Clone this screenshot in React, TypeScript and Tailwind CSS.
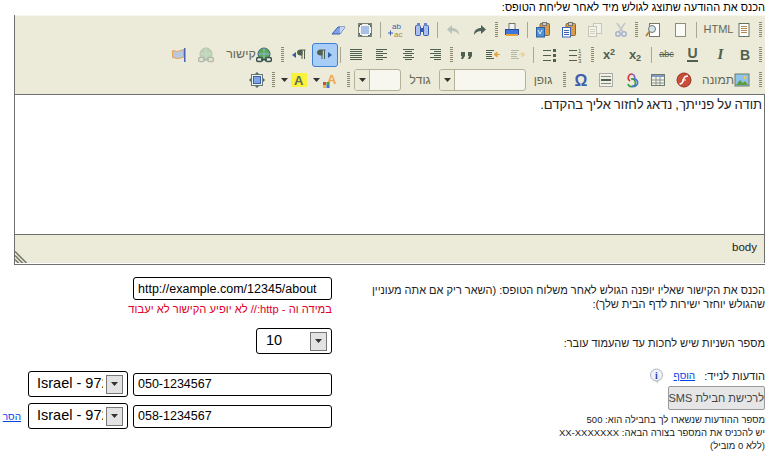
import type { ReactNode } from "react";

const handleLines =
  "w-[3px] h-[16px] bg-[repeating-linear-gradient(to_bottom,#8b8a70_0,#8b8a70_1px,#ecebd9_1px,#ecebd9_2px)]";

function Handle({ w }: { w: string }) {
  return (
    <div className={`flex shrink-0 justify-center ${w}`}>
      <div className={handleLines} />
    </div>
  );
}

function Sep({ w }: { w: string }) {
  return (
    <div className={`flex shrink-0 justify-center ${w}`}>
      <div className="h-[16px] w-px bg-[#a9a896]" />
    </div>
  );
}

function Btn({ w, children }: { w: string; children: ReactNode }) {
  return (
    <div className={`flex h-[20px] shrink-0 items-center justify-center ${w}`}>
      {children}
    </div>
  );
}

function Ico({ children, size = 16 }: { children: ReactNode; size?: number }) {
  return (
    <svg width={size} height={size} viewBox="0 0 16 16" className="shrink-0 [direction:ltr]">
      {children}
    </svg>
  );
}

function Lines({ rows }: { rows: [number, number][] }) {
  return (
    <Ico>
      {rows.map(([x, w], i) => (
        <rect key={i} x={x} y={2 + i * 2} width={w} height="1" fill="#50604f" />
      ))}
    </Ico>
  );
}

const Arrow = () => (
  <svg width="7" height="4" viewBox="0 0 7 4" className="shrink-0">
    <path d="M0 0h7L3.500 4z" fill="#333" />
  </svg>
);

const HtmlDoc = () => (
  <Ico>
    <rect x="3" y="1.500" width="10" height="13" fill="#fff" stroke="#65735f" />
    <path d="M5 4.500h6M5 6.500h6M5 8.500h6M5 10.500h6" stroke="#b0884c" />
  </Ico>
);
const NewDoc = () => (
  <Ico>
    <rect x="3.500" y="1.500" width="10" height="13" fill="#fbfbf5" stroke="#8c8c80" />
  </Ico>
);
const Preview = () => (
  <Ico>
    <rect x="4.500" y="1.500" width="10" height="13" fill="#fff" stroke="#77786c" />
    <circle cx="7" cy="7" r="3.500" fill="#d5e3ee" stroke="#6b7a70" />
    <path d="M4.500 9.500L1 14" stroke="#b5803a" strokeWidth="2" />
  </Ico>
);
const Cut = () => (
  <Ico>
    <path d="M4 1l6 9M12 1L6 10" stroke="#c1c4c4" strokeWidth="1.500" />
    <circle cx="5" cy="12" r="2.200" fill="none" stroke="#a6b2d0" strokeWidth="1.500" />
    <circle cx="11" cy="12" r="2.200" fill="none" stroke="#a6b2d0" strokeWidth="1.500" />
  </Ico>
);
const Copy = () => (
  <Ico>
    <rect x="6.500" y="1.500" width="8" height="10" fill="#f3f3ea" stroke="#c5c6b8" />
    <rect x="1.500" y="4.500" width="8" height="10" fill="#f3f3ea" stroke="#c5c6b8" />
    <path d="M3 7.500h5M3 9.500h5M3 11.500h5" stroke="#d0d1c4" />
  </Ico>
);
const Paste = () => (
  <Ico>
    <rect x="5" y="1.500" width="9.500" height="12" rx="1" fill="#d99a4a" stroke="#8a6a3a" />
    <rect x="7.500" y="0.500" width="4" height="3" fill="#c9cbd0" stroke="#777" />
    <rect x="1.500" y="5.500" width="8" height="9.500" fill="#fff" stroke="#3d62b3" />
    <path d="M3 8.500h5M3 10.500h5M3 12.500h5" stroke="#3d62b3" />
  </Ico>
);
const PasteWord = () => (
  <Ico>
    <rect x="5" y="1.500" width="9.500" height="12" rx="1" fill="#d99a4a" stroke="#8a6a3a" />
    <rect x="7.500" y="0.500" width="4" height="3" fill="#c9cbd0" stroke="#777" />
    <rect x="1.500" y="5.500" width="8" height="9.500" fill="#4f93d6" stroke="#2f5f9f" />
    <path d="M3 8l2 4 2-4" stroke="#dcebf8" fill="none" />
  </Ico>
);
const Print = () => (
  <Ico>
    <rect x="5" y="1.500" width="6" height="6" fill="#f2f2f2" stroke="#777" />
    <rect x="1.500" y="7.500" width="13" height="5" fill="#3f74d8" stroke="#28499a" />
    <rect x="2" y="12" width="12" height="2" fill="#e7a33b" />
  </Ico>
);
const Redo = () => (
  <Ico>
    <path d="M2 13c0-5 3-7 7-7V3l5 4.500L9 12V9c-3 0-5 1-7 4z" fill="#4d6258" />
  </Ico>
);
const Undo = () => (
  <Ico>
    <path d="M14 13c0-5-3-7-7-7V3L2 7.500 7 12V9c3 0 5 1 7 4z" fill="#b9c2b9" />
  </Ico>
);
const Find = () => (
  <Ico>
    <rect x="1.500" y="3.500" width="5" height="10" rx="1" fill="#a9c0ee" stroke="#3959b0" />
    <rect x="9.500" y="3.500" width="5" height="10" rx="1" fill="#a9c0ee" stroke="#3959b0" />
    <rect x="3" y="1" width="3" height="3" fill="#6b85cc" />
    <rect x="10" y="1" width="3" height="3" fill="#6b85cc" />
    <rect x="6" y="6" width="4" height="4" fill="#3959b0" />
  </Ico>
);
const Replace = () => (
  <Ico>
    <text x="4" y="7" fontSize="8" fontFamily="'Liberation Sans', sans-serif" fill="#3f5fae">ab</text>
    <text x="6" y="15" fontSize="8" fontFamily="'Liberation Sans', sans-serif" fill="#a58a3a">ac</text>
    <path d="M0 11h5M2.500 8.500v5" stroke="#3f5fae" />
  </Ico>
);
const Fullscreen = () => (
  <Ico>
    <rect x="1.500" y="1.500" width="13" height="13" fill="#f4f4ea" stroke="#7a8378" />
    <rect x="4" y="4" width="8" height="8" fill="#a9c0e8" />
    <path d="M2.500 5V2.500H5M11 2.500h2.500V5M13.500 11v2.500H11M5 13.500H2.500V11" stroke="#4f6a62" fill="none" />
  </Ico>
);
const Eraser = () => (
  <Ico>
    <path d="M1 12l6-7h7l-5 7z" fill="#7ea3e8" stroke="#3f5fae" />
    <path d="M9 5h5l-5 7z" fill="#c6d6f3" />
  </Ico>
);
const Quote = () => (
  <Ico>
    <path d="M2 5h4v4l-2 3H2l1-3H2zM9 5h4v4l-2 3H9l1-3H9z" fill="#50604f" />
  </Ico>
);
// pale one sits on the right of the pair, arrow pointing right
const Indent = ({ pale }: { pale?: boolean }) => (
  <Ico>
    <g opacity={pale ? 0.35 : 1}>
      <path d="M1 3.500h8M1 5.500h6M1 7.500h6M1 9.500h6M1 11.500h8" stroke="#50604f" />
      {pale ? (
        <path d="M9 7.500h3M12 5v5l3-2.500z" stroke="#e8a33b" fill="#e8a33b" />
      ) : (
        <path d="M15 7.500h-3M12 5v5L9 7.500z" stroke="#e8a33b" fill="#e8a33b" />
      )}
    </g>
  </Ico>
);
const ListBul = () => (
  <Ico>
    <path d="M2 3.500h8M2 8.500h8M2 13.500h8" stroke="#50604f" />
    <rect x="12" y="2" width="3" height="3" fill="#50604f" />
    <rect x="12" y="7" width="3" height="3" fill="#50604f" />
    <rect x="12" y="12" width="3" height="3" fill="#50604f" />
  </Ico>
);
const ListNum = () => (
  <Ico>
    <path d="M2 3.500h8M2 8.500h8M2 13.500h8" stroke="#50604f" />
    <text x="11" y="6" fontSize="6" fill="#50604f" fontFamily="'Liberation Sans', sans-serif">1</text>
    <text x="11" y="11" fontSize="6" fill="#50604f" fontFamily="'Liberation Sans', sans-serif">2</text>
    <text x="11" y="16" fontSize="6" fill="#50604f" fontFamily="'Liberation Sans', sans-serif">3</text>
  </Ico>
);
const Pilcrow = ({ arrow }: { arrow: "l" | "r" }) => (
  <Ico>
    <path d="M8 3H6a2.500 2.500 0 000 5h2zM8 3v9M10.500 3v9M8 3h3.500" fill="#50604f" stroke="#50604f" transform={arrow === "r" ? "translate(-3 0)" : "translate(3 0)"} />
    {arrow === "r" ? (
      <path d="M11 5l4 3-4 3z" fill="#2f5f9f" />
    ) : (
      <path d="M5 5L1 8l4 3z" fill="#2f5f9f" />
    )}
  </Ico>
);
const Globe = ({ faded }: { faded?: boolean }) => (
  <Ico>
    <g opacity={faded ? 0.32 : 1}>
      <circle cx="8" cy="7" r="6" fill="#5cab54" stroke="#3d5f78" />
      <path d="M8 1v12M2.500 7h11" stroke="#8fb6e2" />
      <rect x="0.500" y="10.500" width="6" height="4" rx="2" fill="#e8e8dc" stroke="#3a5550" strokeWidth="1.500" />
      <rect x="9.500" y="10.500" width="6" height="4" rx="2" fill="#e8e8dc" stroke="#3a5550" strokeWidth="1.500" />
      <path d="M5 12.500h6" stroke="#3a5550" strokeWidth="1.500" />
    </g>
  </Ico>
);
const Flag = () => (
  <Ico>
    <path d="M1.500 3.500l5 1 6-2v8l-6 1-5-1z" fill="#b8c9dd" stroke="#e3a25a" />
    <rect x="13" y="1" width="1.500" height="14" fill="#4a63b5" />
  </Ico>
);
const ImageIco = () => (
  <Ico>
    <rect x="1" y="2" width="14" height="12" fill="#8ec3ea" stroke="#6b7a68" />
    <circle cx="11" cy="5.500" r="1.500" fill="#f4c94a" />
    <path d="M2 13l4-5 3 3 2-2 3 4z" fill="#5e9c3f" />
  </Ico>
);
const FlashIco = () => (
  <Ico>
    <circle cx="8" cy="8" r="7" fill="#c84e3a" stroke="#9a3326" />
    <path d="M12 4c-3 0-4 1-4.500 3.500S6 12 3.500 12" stroke="#fff" strokeWidth="1.500" fill="none" />
    <path d="M6 8h4" stroke="#fff" />
  </Ico>
);
const TableIco = () => (
  <Ico>
    <rect x="1.500" y="2.500" width="13" height="11" fill="#f2f2ea" stroke="#6d7a70" />
    <rect x="2" y="3" width="12" height="2" fill="#7f9ac9" />
    <path d="M6 5v8M10 5v8M2 8h12M2 11h12" stroke="#8a958a" />
  </Ico>
);
const LinkColor = () => (
  <Ico>
    <path d="M6 9A3.800 3.800 0 018 2" stroke="#d83a3a" strokeWidth="1.600" fill="none" />
    <path d="M8 2a3.800 3.800 0 012 6" stroke="#8c5fc0" strokeWidth="1.600" fill="none" />
    <path d="M7 7a3.800 3.800 0 11-3 5" stroke="#3f9c45" strokeWidth="1.600" fill="none" />
    <path d="M9 7a3.800 3.800 0 11-1 7" stroke="#3f74d8" strokeWidth="1.600" fill="none" />
  </Ico>
);
const HrIco = () => (
  <Ico>
    <rect x="1.500" y="1.500" width="13" height="13" fill="#f0f0e6" stroke="#aaa" />
    <rect x="3" y="4" width="10" height="1" fill="#808a80" />
    <rect x="3" y="7" width="10" height="2" fill="#4f5f55" />
    <rect x="3" y="11" width="10" height="1" fill="#808a80" />
  </Ico>
);
const CharMap = () => (
  <Ico>
    <text x="8" y="14" textAnchor="middle" fontSize="16" fontWeight="700" fill="#3f5fae" fontFamily="'Liberation Sans', sans-serif">Ω</text>
  </Ico>
);
const FontColor = () => (
  <Ico>
    <text x="4" y="12" fontSize="13" fontWeight="700" fill="#efa64f" fontFamily="'Liberation Sans', sans-serif">A</text>
    <rect x="0" y="10" width="3" height="3" fill="#d9493a" />
    <rect x="3.500" y="10" width="3" height="3" fill="#4aa04a" />
    <rect x="0" y="13" width="3" height="3" fill="#e8b83a" />
    <rect x="3.500" y="13" width="3" height="3" fill="#3f74d8" />
  </Ico>
);
const Highlight = () => (
  <Ico>
    <rect x="0" y="1" width="16" height="14" fill="#fbf33a" />
    <text x="3" y="13" fontSize="13" fontWeight="700" fill="#5f6a5f" fontFamily="'Liberation Sans', sans-serif">A</text>
  </Ico>
);
const Visual = () => (
  <Ico>
    <path d="M8 0l2 2H6zM8 16l-2-2h4zM0 8l2-2v4zM16 8l-2 2V6z" fill="#4f6a62" />
    <rect x="2.500" y="2.500" width="11" height="11" fill="#f0f0e6" stroke="#5f7a72" />
    <rect x="4.500" y="4.500" width="7" height="7" fill="#7ea3e8" stroke="#3f5fae" />
  </Ico>
);
const InfoIco = () => (
  <svg width="15" height="16" viewBox="0 0 15 16" className="shrink-0 [direction:ltr]">
    <circle cx="7.500" cy="7" r="6" fill="#eef2fb" stroke="#aeb4c2" />
    <path d="M6 13l3 2.500V12z" fill="#c4c8d0" />
    <text x="7.500" y="10.500" textAnchor="middle" fontSize="10" fontWeight="700" fill="#2747b8" fontFamily="'Liberation Serif', serif">i</text>
  </svg>
);

function TbText({ children }: { children: ReactNode }) {
  return <span className="text-[12px] leading-none text-[#666655]">{children}</span>;
}

function ToolSelect({ w }: { w: string }) {
  return (
    <div className={`flex h-[22px] shrink-0 items-stretch overflow-hidden rounded-[3px] border border-[#b3b199] bg-[#f7f7ef] ${w}`}>
      <div className="flex-1" />
      <div className="flex w-[15px] items-center justify-center border-r border-[#b3b199] bg-[#ecebd9]">
        <Arrow />
      </div>
    </div>
  );
}

function FieldSelect({ w, value, pad }: { w: string; value: string; pad: string }) {
  return (
    <div dir="ltr" className={`flex h-[26px] shrink-0 items-center rounded-[3px] border border-black bg-white text-[14.500px] text-black ${w} ${pad}`}>
      <span className="mr-[3px] flex-1 overflow-hidden whitespace-nowrap">{value}</span>
      <div className="mr-[4px] flex h-[19px] w-[17px] shrink-0 items-center justify-center border border-[#777] bg-[#e3e3e3]">
        <Arrow />
      </div>
    </div>
  );
}

function TextField({ value }: { value: string }) {
  return (
    <input
      readOnly
      dir="ltr"
      value={value}
      className="h-[23px] w-[199px] rounded-[3px] border border-black bg-white px-[4px] text-[12.500px] text-black outline-none"
    />
  );
}

export default function App() {
  return (
    <div dir="rtl" className="h-[455px] w-[769px] overflow-hidden bg-white font-['Liberation_Sans',sans-serif] text-[12px] text-black">
      <div className="h-[15px] pr-[4px] text-[11px] leading-[15px]">
        הכנס את ההודעה שתוצג לגולש מיד לאחר שליחת הטופס:
      </div>

      {/* Editor */}
      <div className="ml-[14px] mr-[4px] h-[250px] border-b border-l border-[#6f6f6f]">
        <div className="h-[79px] border-t border-[#f6f6ee] bg-[#ecebd9] pt-[1px]">
          <div className="flex h-[25px] items-center">
            <Handle w="w-[10px]" />
            <Btn w="w-[56px]">
              <div className="flex items-center gap-[3px] pl-[2px]">
                <HtmlDoc />
                <span className="text-[11px] leading-none text-[#666655]">HTML</span>
              </div>
            </Btn>
            <Sep w="w-[6px]" />
            <Btn w="w-[26px]"><NewDoc /></Btn>
            <Btn w="w-[28px]"><Preview /></Btn>
            <Handle w="w-[5px]" />
            <Btn w="w-[26px]"><Cut /></Btn>
            <Btn w="w-[26px]"><Copy /></Btn>
            <Btn w="w-[26px]"><Paste /></Btn>
            <Btn w="w-[26px]"><PasteWord /></Btn>
            <Sep w="w-[5px]" />
            <Btn w="w-[26px]"><Print /></Btn>
            <Handle w="w-[6px]" />
            <Btn w="w-[27px]"><Redo /></Btn>
            <Btn w="w-[26px]"><Undo /></Btn>
            <Sep w="w-[5px]" />
            <Btn w="w-[26px]"><Find /></Btn>
            <Btn w="w-[26px]"><Replace /></Btn>
            <Sep w="w-[6px]" />
            <Btn w="w-[24px]"><Fullscreen /></Btn>
            <Btn w="w-[28px]"><Eraser /></Btn>
          </div>

          <div className="flex h-[25px] items-center">
            <Handle w="w-[10px]" />
            <Btn w="w-[20px]"><span className="text-[14px] font-bold leading-none text-[#50604f]">B</span></Btn>
            <Btn w="w-[29px]"><span className="font-['Liberation_Serif',serif] text-[15px] font-bold italic leading-none text-[#50604f]">I</span></Btn>
            <Btn w="w-[27px]"><span className="border-b-2 border-[#50604f] text-[14px] font-bold leading-[13px] text-[#50604f]">U</span></Btn>
            <Btn w="w-[25px]"><span className="text-[9px] leading-none text-[#50604f] line-through">abc</span></Btn>
            <Sep w="w-[6px]" />
            <Btn w="w-[26px]"><span dir="ltr" className="text-[13px] font-bold leading-none text-[#50604f]">x<sub className="text-[9px]">2</sub></span></Btn>
            <Btn w="w-[26px]"><span dir="ltr" className="text-[13px] font-bold leading-none text-[#50604f]">x<sup className="text-[9px]">2</sup></span></Btn>
            <Handle w="w-[7px]" />
            <Btn w="w-[28px]"><ListNum /></Btn>
            <Btn w="w-[25px]"><ListBul /></Btn>
            <Sep w="w-[5px]" />
            <Btn w="w-[26px]"><Indent pale /></Btn>
            <Btn w="w-[25px]"><Indent /></Btn>
            <Btn w="w-[26px]"><Quote /></Btn>
            <Handle w="w-[6px]" />
            <Btn w="w-[27px]"><Lines rows={[[3, 11], [7, 7], [3, 11], [7, 7], [3, 11], [7, 7]]} /></Btn>
            <Btn w="w-[26px]"><Lines rows={[[3, 11], [5, 7], [3, 11], [5, 7], [3, 11], [5, 7]]} /></Btn>
            <Btn w="w-[26px]"><Lines rows={[[2, 11], [2, 7], [2, 11], [2, 7], [2, 11], [2, 7]]} /></Btn>
            <Btn w="w-[26px]"><Lines rows={[[2, 12], [2, 12], [2, 12], [2, 12], [2, 12], [2, 12]]} /></Btn>
            <Sep w="w-[5px]" />
            <div className="flex h-[24px] w-[26px] shrink-0 items-center justify-center rounded-[3px] border border-[#3f7fd8] bg-[#a8cdf6]">
              <Pilcrow arrow="r" />
            </div>
            <Btn w="w-[26px]"><Pilcrow arrow="l" /></Btn>
            <Handle w="w-[7px]" />
            <Btn w="w-[60px]">
              <div className="flex items-center">
                <Globe />
                <span className="text-[12.500px] leading-none text-[#666655]">קישור</span>
              </div>
            </Btn>
            <Btn w="w-[27px]"><Globe faded /></Btn>
            <Btn w="w-[26px]"><Flag /></Btn>
          </div>

          <div className="flex h-[25px] items-center">
            <Handle w="w-[10px]" />
            <Btn w="w-[58px]">
              <div className="flex items-center">
                <ImageIco />
                <TbText>תמונה</TbText>
              </div>
            </Btn>
            <Btn w="w-[26px]"><FlashIco /></Btn>
            <Btn w="w-[26px]"><TableIco /></Btn>
            <Btn w="w-[26px]"><LinkColor /></Btn>
            <Btn w="w-[26px]"><HrIco /></Btn>
            <Btn w="w-[25px]"><CharMap /></Btn>
            <Handle w="w-[8px]" />
            <Btn w="w-[34px]"><TbText>גופן</TbText></Btn>
            <ToolSelect w="w-[87px]" />
            <Btn w="w-[38px]"><TbText>גודל</TbText></Btn>
            <ToolSelect w="w-[47px]" />
            <Handle w="w-[12px]" />
            <Btn w="w-[32px]">
              <div className="flex items-center gap-[3px]">
                <FontColor />
                <Arrow />
              </div>
            </Btn>
            <Btn w="w-[33px]">
              <div className="flex items-center gap-[3px]">
                <Highlight />
                <Arrow />
              </div>
            </Btn>
            <Handle w="w-[7px]" />
            <Btn w="w-[26px]"><Visual /></Btn>
          </div>
        </div>
        <div className="h-[141px] border-y border-r border-[#6f6f6f] bg-white pr-[2px] pt-[1px] text-[13px] leading-[17px] text-[#222] [word-spacing:-0.7px]">
          תודה על פנייתך, נדאג לחזור אליך בהקדם.
        </div>
        <div className="relative h-[28px] border-r border-[#6f6f6f] bg-[#ecebd9] pr-[7px] pt-[5px] text-[11.500px] leading-[14px] text-[#222]">
          <span dir="ltr">body</span>
          <svg width="12" height="12" viewBox="0 0 12 12" className="absolute bottom-0 left-0">
            <path d="M0 0.500L12 12.500M0 4.500L8 12.500M0 8.500L4 12.500" stroke="#77776a" strokeWidth="1.500" />
          </svg>
        </div>
      </div>

      {/* Form */}
      <div className="flex">
        <div className="w-[437px] shrink-0 pr-[4px]">
          <div className="mt-[18px] w-[410px] text-[11px] leading-[14px] text-[#222]">
            הכנס את הקישור שאליו יופנה הגולש לאחר משלוח הטופס: (השאר ריק אם אתה מעוניין שהגולש יוחזר ישירות לדף הבית שלך):
          </div>
          <div className="mt-[25px] text-[11px] leading-[14px] text-[#222]">
            מספר השניות שיש לחכות עד שהעמוד עובר:
          </div>
          <div className="mt-[19px] flex h-[14px] items-center text-[11px] leading-[14px] text-[#222]">
            <span>הודעות לנייד:</span>
            <a className="mr-[9px] text-[10px] text-[#0645e8] underline">הוסף</a>
            <span className="mr-[10px]"><InfoIco /></span>
          </div>
          <button className="mt-[3px] block h-[24px] w-[97px] whitespace-nowrap rounded-[2px] border border-[#9a9a9a] bg-[#e6e6e6] text-[11px] text-[#444]">
            לרכישת חבילת SMS
          </button>
          <div className="mt-[3px] text-[9.500px] leading-[13px] text-[#222]">
            <div>מספר ההודעות שנשארו לך בחבילה הוא: 500</div>
            <div>יש להכניס את המספר בצורה הבאה: XX-XXXXXXX</div>
            <div>(ללא 0 מוביל)</div>
          </div>
        </div>

        <div className="flex-1">
          <div className="mt-[12px]"><TextField value="http://example.com/12345/about" /></div>
          <div className="mt-[2px] text-[11.200px] leading-[14px] text-[#e0002a]">
            במידה וה - http:// לא יופיע הקישור לא יעבוד
          </div>
          <div className="mt-[12px]">
            <FieldSelect w="w-[76px]" value="10" pad="pl-[9px]" />
          </div>
          <div className="mt-[17px] flex items-center">
            <TextField value="050-1234567" />
            <div className="mr-[5px]"><FieldSelect w="w-[100px]" value="Israel - 972" pad="pl-[8px]" /></div>
          </div>
          <div className="mt-[6px] flex items-center">
            <TextField value="058-1234567" />
            <div className="mr-[5px]"><FieldSelect w="w-[100px]" value="Israel - 972" pad="pl-[8px]" /></div>
            <a className="mr-[7px] text-[10px] text-[#0645e8] underline">הסר</a>
          </div>
        </div>
      </div>
    </div>
  );
}
